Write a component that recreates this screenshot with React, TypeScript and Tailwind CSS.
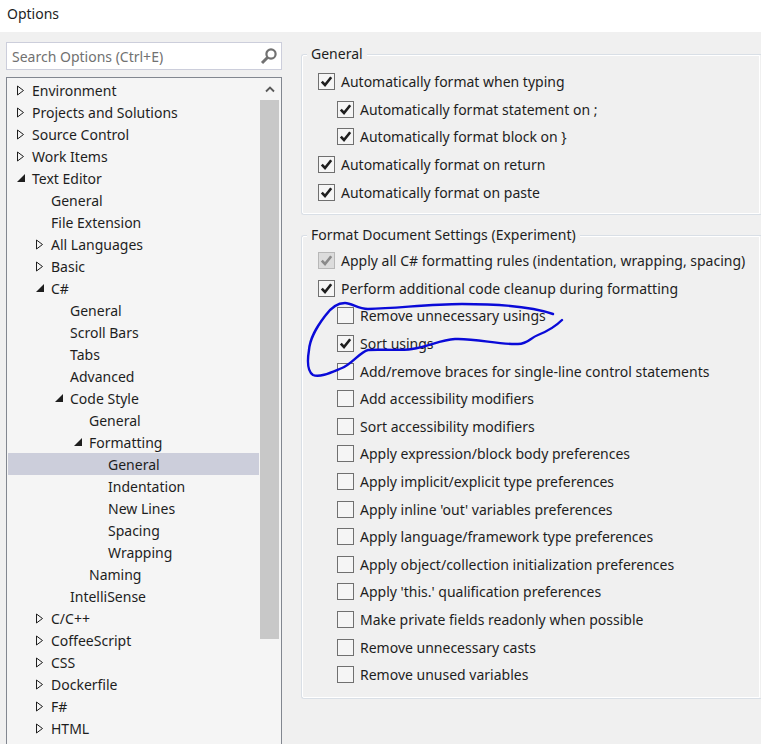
import { ReactNode } from 'react'

type TreeItem = { label: string; depth: number; arrow?: 'open' | 'closed'; selected?: boolean }

const tree: TreeItem[] = [
  { label: 'Environment', depth: 0, arrow: 'closed' },
  { label: 'Projects and Solutions', depth: 0, arrow: 'closed' },
  { label: 'Source Control', depth: 0, arrow: 'closed' },
  { label: 'Work Items', depth: 0, arrow: 'closed' },
  { label: 'Text Editor', depth: 0, arrow: 'open' },
  { label: 'General', depth: 1 },
  { label: 'File Extension', depth: 1 },
  { label: 'All Languages', depth: 1, arrow: 'closed' },
  { label: 'Basic', depth: 1, arrow: 'closed' },
  { label: 'C#', depth: 1, arrow: 'open' },
  { label: 'General', depth: 2 },
  { label: 'Scroll Bars', depth: 2 },
  { label: 'Tabs', depth: 2 },
  { label: 'Advanced', depth: 2 },
  { label: 'Code Style', depth: 2, arrow: 'open' },
  { label: 'General', depth: 3 },
  { label: 'Formatting', depth: 3, arrow: 'open' },
  { label: 'General', depth: 4, selected: true },
  { label: 'Indentation', depth: 4 },
  { label: 'New Lines', depth: 4 },
  { label: 'Spacing', depth: 4 },
  { label: 'Wrapping', depth: 4 },
  { label: 'Naming', depth: 3 },
  { label: 'IntelliSense', depth: 2 },
  { label: 'C/C++', depth: 1, arrow: 'closed' },
  { label: 'CoffeeScript', depth: 1, arrow: 'closed' },
  { label: 'CSS', depth: 1, arrow: 'closed' },
  { label: 'Dockerfile', depth: 1, arrow: 'closed' },
  { label: 'F#', depth: 1, arrow: 'closed' },
  { label: 'HTML', depth: 1, arrow: 'closed' },
]

const indent = ['pl-[8px]', 'pl-[27px]', 'pl-[46px]', 'pl-[65px]', 'pl-[84px]']

const Arrow = ({ kind }: { kind?: 'open' | 'closed' }) => (
  <span className="w-[16px] h-[22px] shrink-0 flex items-center">
    {kind === 'closed' && (
      <svg width="9" height="11" viewBox="0 0 9 11">
        <path d="M1.5 1 L7.5 5.5 L1.5 10 Z" fill="#f5f5f5" stroke="#1e1e1e" strokeWidth="1" />
      </svg>
    )}
    {kind === 'open' && (
      <svg width="10" height="10" viewBox="0 0 10 10">
        <path d="M9 1 L9 9 L1 9 Z" fill="#1e1e1e" />
      </svg>
    )}
  </span>
)

const Check = ({ color }: { color: string }) => (
  <svg width="13" height="13" viewBox="0 0 13 13">
    <path d="M1.8 6.6 L5 10 L11.2 2.2" fill="none" stroke={color} strokeWidth="2.6" />
  </svg>
)

const Option = ({
  label,
  checked = false,
  disabled = false,
  nested = false,
}: {
  label: string
  checked?: boolean
  disabled?: boolean
  nested?: boolean
}) => (
  <div className={`h-[27.6px] flex items-center ${nested ? 'pl-[35px]' : 'pl-[16px]'}`}>
    <span
      className={`w-[17px] h-[17px] border flex items-center justify-center mr-[6px] shrink-0 ${
        disabled ? 'border-[#b8b8b8] bg-[#dcdcdc]' : 'border-[#707070] bg-[#f5f5f5]'
      }`}
    >
      {checked && <Check color={disabled ? '#8a8a8a' : '#1e1e1e'} />}
    </span>
    <span className="whitespace-nowrap">{label}</span>
  </div>
)

const Group = ({ title, children, className }: { title: string; children: ReactNode; className: string }) => (
  <div className={`relative border-y border-l border-[#d9dfe6] rounded-l-[3px] outline outline-1 outline-white -outline-offset-2 ${className}`}>
    <span className="absolute -top-[11px] left-[5px] px-[4px] bg-[#f0f0f0] whitespace-nowrap leading-[20px]">{title}</span>
    {children}
  </div>
)

const formatOptions = [
  'Add/remove braces for single-line control statements',
  'Add accessibility modifiers',
  'Sort accessibility modifiers',
  'Apply expression/block body preferences',
  'Apply implicit/explicit type preferences',
  "Apply inline 'out' variables preferences",
  'Apply language/framework type preferences',
  'Apply object/collection initialization preferences',
  "Apply 'this.' qualification preferences",
  'Make private fields readonly when possible',
  'Remove unnecessary casts',
  'Remove unused variables',
]

export default function App() {
  return (
    <div className="relative w-[761px] h-[744px] overflow-hidden bg-[#f0f0f0] text-[#1e1e1e] text-[14px] font-['Noto_Sans',sans-serif]">
      <div className="h-[32px] bg-white pl-[7px] pt-[4px] text-[14px] leading-[20px]">Options</div>

      <div className="flex">
        {/* Left column */}
        <div className="w-[276px] ml-[6px] shrink-0 pt-[10px]">
          <div className="h-[28px] border border-[#cccedb] bg-white flex items-center justify-between pl-[5px] pr-[3px]">
            <span className="text-[#717171]">Search Options (Ctrl+E)</span>
            <svg width="18" height="18" viewBox="0 0 18 18">
              <circle cx="11" cy="7" r="4.6" fill="none" stroke="#717171" strokeWidth="2.2" />
              <path d="M7.5 10.5 L2 16" stroke="#717171" strokeWidth="3" />
            </svg>
          </div>

          <div className="mt-[7px] h-[680px] border-x border-t border-[#828790] bg-[#f5f5f5] flex">
            <div className="flex-1 pt-[1px] min-w-0">
              {tree.map((item, i) => (
                <div
                  key={i}
                  className={`h-[22px] flex items-center ml-[1px] ${indent[item.depth]} ${item.selected ? 'bg-[#cccedb]' : ''}`}
                >
                  <Arrow kind={item.arrow} />
                  <span className="whitespace-nowrap">{item.label}</span>
                </div>
              ))}
            </div>
            <div className="w-[19px] mr-[2px] ml-[1px] shrink-0 bg-[#f5f5f5]">
              <div className="h-[22px] flex items-center justify-center">
                <svg width="10" height="7" viewBox="0 0 10 7">
                  <path d="M1 5.5 L5 1.5 L9 5.5" fill="none" stroke="#5a5a5a" strokeWidth="1.8" />
                </svg>
              </div>
              <div className="h-[539px] bg-[#c8c8c8]" />
            </div>
          </div>
        </div>

        {/* Right column */}
        <div className="ml-[19px] flex-1 pt-[22px] min-w-0">
          <Group title="General" className="h-[161px] pt-[13px]">
            <Option label="Automatically format when typing" checked />
            <Option label="Automatically format statement on ;" checked nested />
            <Option label="Automatically format block on }" checked nested />
            <Option label="Automatically format on return" checked />
            <Option label="Automatically format on paste" checked />
          </Group>
          <Group title="Format Document Settings (Experiment)" className="mt-[20px] h-[464px] pt-[11px]">
            <Option label="Apply all C# formatting rules (indentation, wrapping, spacing)" checked disabled />
            <Option label="Perform additional code cleanup during formatting" checked />
            <Option label="Remove unnecessary usings" nested />
            <Option label="Sort usings" checked nested />
            {formatOptions.map((label) => (
              <Option key={label} label={label} nested />
            ))}
          </Group>
        </div>
      </div>

      {/* Hand-drawn scribble over the options */}
      <svg className="absolute left-0 top-0 pointer-events-none" width="761" height="744" viewBox="0 0 761 744">
        <path
          d="M553 314 C530 306 500 304 462 304 C430 304 400 308 368 309 C358 309 352 303 345 303 C338 303 332 306 325 316 C316 328 310 338 309 350 C307 362 307 371 313 375 C320 378 332 372 342 368 C352 364 360 352 368 350 C380 349 398 351 412 349 C430 346 440 340 455 339 C475 338 500 345 518 344 C528 344 530 338 538 335 C548 331 556 326 562 320"
          fill="none"
          stroke="#0a0ad8"
          strokeWidth="2.4"
          strokeLinecap="round"
        />
      </svg>
    </div>
  )
}
